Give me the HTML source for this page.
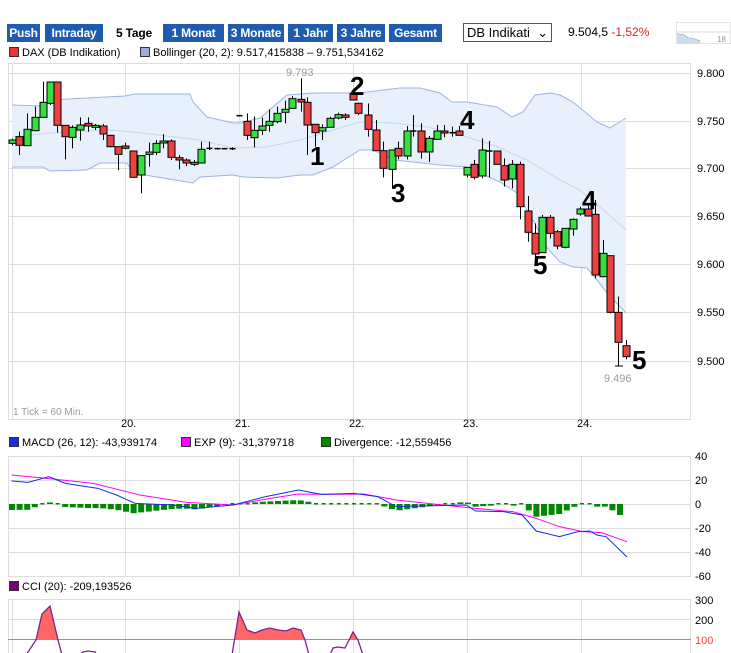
<!DOCTYPE html>
<html><head><meta charset="utf-8"><style>
body{margin:0;width:731px;height:653px;overflow:hidden;background:#fff;font-family:"Liberation Sans",sans-serif;position:relative}
.b{position:absolute;top:24px;height:18px;background:#1f5cb0;color:#fff;font:bold 12px "Liberation Sans",sans-serif;line-height:18px;text-align:center;white-space:nowrap;letter-spacing:-0.2px}
.sel{background:#fff;color:#000}
.t{position:absolute;font-size:11px;color:#000;white-space:nowrap}
.sq{display:inline-block;width:8px;height:8px;border:1px solid #333;margin-right:3px;vertical-align:-1px}
</style></head><body>
<div class="b" style="left:7px;width:33px">Push</div>
<div class="b" style="left:45px;width:58px">Intraday</div>
<div class="b sel" style="left:109px;width:50px">5 Tage</div>
<div class="b" style="left:163px;width:61px">1 Monat</div>
<div class="b" style="left:228px;width:56px">3 Monate</div>
<div class="b" style="left:288px;width:45px">1 Jahr</div>
<div class="b" style="left:337px;width:48px">3 Jahre</div>
<div class="b" style="left:389px;width:53px">Gesamt</div>
<div style="position:absolute;left:463px;top:23px;border:1px solid #555;font-size:13px;line-height:17px;padding-left:3px;box-sizing:border-box;width:89px;height:19px">DB Indikati <span style="position:absolute;right:3px;top:0">&#8964;</span></div>
<div class="t" style="left:568px;top:25px;font-size:12px">9.504,5 <span style="color:#d22">-1,52%</span></div>
<svg style="position:absolute;left:676px;top:22px" width="55" height="22"><rect x="0" y="0" width="55" height="22" fill="#fff" stroke="#ccc"/><line x1="0" y1="10" x2="55" y2="10" stroke="#ddd"/><polyline points="1,12 8,13 12,16 18,17 24,19" fill="none" stroke="#89a" /><polygon points="1,12 8,13 12,16 18,17 24,19 24,22 1,22" fill="#cde"/><text x="41" y="20" font-size="8" fill="#999">18</text></svg>
<div class="t" style="left:9px;top:47px"><span class="sq" style="background:#e33"></span>DAX (DB Indikation)</div>
<div class="t" style="left:140px;top:47px"><span class="sq" style="background:#9ab0dc"></span>Bollinger (20, 2): 9.517,415838 – 9.751,534162</div>
<div class="t" style="left:9px;top:437px"><span class="sq" style="background:#1030e0"></span>MACD (26, 12): -43,939174</div>
<div class="t" style="left:181px;top:437px"><span class="sq" style="background:#f0f"></span>EXP (9): -31,379718</div>
<div class="t" style="left:321px;top:437px"><span class="sq" style="background:#080"></span>Divergence: -12,559456</div>
<div class="t" style="left:9px;top:581px"><span class="sq" style="background:#707"></span>CCI (20): -209,193526</div>
<svg id="s" style="position:absolute;left:0;top:0" width="731" height="653" font-family="Liberation Sans,sans-serif"></svg>
<script>
var s=document.getElementById('s'),h='';
function L(x1,y1,x2,y2,c,w){h+='<line x1="'+x1+'" y1="'+y1+'" x2="'+x2+'" y2="'+y2+'" stroke="'+c+'" stroke-width="'+(w||1)+'"/>';}
function T(x,y,t,o){h+='<text x="'+x+'" y="'+y+'" '+(o||'font-size="11"')+'>'+t+'</text>';}
var vx=[125,239,353,467,581];
h+='<rect x="8.5" y="63.5" width="682" height="356" fill="none" stroke="#ddd"/>';
L(12.5,63,12.5,420,'#ddd');
[73,121,168,216,264,312,361].forEach(function(y,i){L(8,y+.5,691,y+.5,'#ddd');T(697,y+4,['9.800','9.750','9.700','9.650','9.600','9.550','9.500'][i]);});
vx.forEach(function(x,i){L(x+.5,63,x+.5,420,'#ddd');T(x-4,427,(20+i)+'.');});
T(13,415,'1 Tick = 60 Min.','font-size="10" fill="#999"');
var up=[[12,105],[43,106],[50,100],[125,96],[135,94],[190,94],[193,102],[207,117],[233,123],[240,123],[260,118],[287,95],[313,93],[353,93],[360,93],[383,90],[400,88],[420,88],[440,93],[452,102],[467,102],[497,107],[512,117],[523,112],[535,95],[550,93],[560,95],[573,102],[597,122],[610,128],[626,118]];
var lo=[[12,167],[43,167],[50,171],[87,170],[100,163],[127,163],[133,173],[193,183],[200,177],[233,175],[243,177],[277,178],[300,175],[313,175],[333,167],[347,158],[360,150],[373,150],[393,160],[413,162],[440,165],[467,167],[480,173],[500,182],[517,193],[533,220],[547,248],[560,262],[573,267],[587,268],[597,280],[607,293],[626,313]];
var md=[[12,137],[50,133],[110,130],[133,132],[200,140],[233,148],[267,147],[300,140],[333,130],[360,122],[393,123],[427,127],[460,135],[493,145],[527,160],[560,180],[580,190],[600,207],[626,230]];
function P(a){return a.map(function(p){return p.join(',')}).join(' ');}
h+='<polygon points="'+P(up)+' '+P(lo.slice().reverse())+'" fill="#e8f0fc"/>';
h+='<polyline points="'+P(up)+'" fill="none" stroke="#9db3df"/>';
h+='<polyline points="'+P(lo)+'" fill="none" stroke="#9db3df"/>';
h+='<polyline points="'+P(md)+'" fill="none" stroke="#c4d6f2"/>';
var c2=[[37,240,250,236,256,'g'],[58,230,256,215,285,'r'],[82,208,257,160,257,'g'],[106,172,212,140,212,'g'],[128,127,172,65,172,'g'],[150,66,130,66,135,'g'],[172,66,196,66,218,'r'],[196,196,230,196,298,'r'],[216,202,232,196,265,'g'],[240,195,210,172,242,'g'],[265,190,198,172,215,'r'],[286,196,202,192,210,'g'],[310,198,222,192,240,'r'],[330,226,260,226,262,'r'],[354,260,283,260,330,'r'],[375,258,265,248,268,'r'],[400,273,352,273,352,'r'],[424,287,345,287,400,'g'],[446,276,283,248,320,'g'],[468,250,277,240,285,'g'],[490,243,249,222,265,'g'],[514,243,292,238,300,'r'],[538,293,300,285,328,'r'],[558,300,309,295,318,'r'],[582,307,310,300,318,'g'],[604,268,309,245,309,'g'],[628,265,265,245,270,'d'],[650,266,266,263,269,'d'],[672,266,266,264,268,'d'],[696,266,266,262,270,'d'],[718,167,167,167,167,'d'],[742,184,226,160,240,'r'],[762,211,233,170,262,'g'],[786,198,211,173,225,'g'],[808,184,196,148,215,'g'],[830,160,185,140,190,'g'],[856,148,157,122,190,'g'],[876,116,145,108,145,'g'],[902,118,126,55,155,'r'],[922,127,195,112,285,'r'],[946,193,218,193,260,'r'],[966,203,213,193,240,'g'],[990,175,202,170,202,'g'],[1014,164,174,158,178,'g'],[1036,165,172,160,180,'r'],[1060,100,120,100,120,'r']];
var c3=[[-5,130,160,128,165,'r'],[25,165,208,130,230,'r'],[48,210,272,180,272,'r'],[70,272,325,245,352,'r'],[95,270,328,270,385,'g'],[115,265,288,245,298,'r'],[140,213,288,198,298,'g'],[160,213,213,165,230,'d'],[184,213,276,190,296,'r'],[208,235,276,228,306,'g'],[230,213,238,195,238,'g'],[252,213,218,195,232,'r'],[275,218,218,200,230,'d'],[298,213,226,198,226,'r'],[320,322,345,322,352,'g'],[343,313,352,300,358,'r'],[367,270,348,235,355,'g'],[388,273,273,243,352,'d'],[412,273,313,273,313,'r'],[433,317,360,295,380,'r'],[457,313,357,300,385,'g'],[481,313,440,305,478,'r'],[503,453,517,408,545,'r'],[526,520,582,490,590,'r'],[546,472,578,465,578,'g'],[570,472,520,465,535,'r'],[592,515,558,510,568,'r'],[616,505,562,505,565,'g'],[640,478,507,475,527,'g'],[661,447,462,440,467,'g'],[685,447,468,430,470,'r'],[705,463,645,420,655,'r'],[730,580,650,540,652,'g'],[750,587,757,587,760,'r'],[775,757,847,710,917,'r'],[798,857,890,840,898,'r']];
function C(d,ox,oy){var x=Math.round(d[0]/3+ox)+.5,bt=d[1]/3+oy,bb=d[2]/3+oy,wt=d[3]/3+oy,wb=d[4]/3+oy;
L(x,wt,x,wb,'#000');
if(d[5]=='d'){L(x-3,bt,x+3,bt,'#000',1.5);return;}
h+='<rect x="'+(x-3.5)+'" y="'+bt+'" width="7" height="'+Math.max(bb-bt,2)+'" fill="'+(d[5]=='g'?'#33e040':'#ee4040')+'" stroke="#000"/>';}
c2.forEach(function(d){C(d,0,60)});c3.forEach(function(d){C(d,360,60)});
L(615,366,623,366,'#000');
T(286,76,'9.793','font-size="11" fill="#999"');T(604,382,'9.496','font-size="11" fill="#999"');
var n='font-size="26" font-weight="bold" fill="#000"';
T(310,165,'1',n);T(350,95,'2',n);T(391,202,'3',n);T(460,129,'4',n);T(533,274,'5',n);T(582,209,'4',n);T(632,369,'5',n);
h+='<rect x="8.5" y="456.5" width="682" height="120" fill="none" stroke="#ddd"/>';
[456,480,504,528,552,576].forEach(function(y,i){if(i>0&&i<5)L(8,y+.5,691,y+.5,'#ddd');T(695,y+4,['40','20','0','-20','-40','-60'][i]);});
vx.forEach(function(x){L(x+.5,456,x+.5,576,'#ddd');});
function cv(a){return a.map(function(p){return [p[0]/2.145,p[1]/3+395]});}
var bl=cv([[25,258],[60,262],[105,245],[140,265],[210,280],[250,300],[290,325],[370,330],[420,340],[500,330],[570,305],[640,285],[690,298],[760,295],[810,305],[850,335],[940,332],[1000,330],[1020,348],[1080,350],[1120,360],[1150,408],[1200,425],[1240,410],[1265,408],[1280,420],[1300,425],[1345,486]]);
var pk=cv([[25,240],[100,250],[200,265],[300,300],[400,322],[500,330],[580,310],[640,297],[700,298],[780,297],[850,315],[950,330],[1020,340],[1100,350],[1150,370],[1200,395],[1250,410],[1290,413],[1345,440]]);
function ip(a,x){for(var i=1;i<a.length;i++)if(a[i][0]>=x){var t=(x-a[i-1][0])/(a[i][0]-a[i-1][0]);return a[i-1][1]+t*(a[i][1]-a[i-1][1]);}return a[a.length-1][1];}
for(var x=12;x<=627;x+=7.6){var v=ip(bl,x)-ip(pk,x);var y0=504;if(Math.abs(v)<1.2){h+='<rect x="'+(x-2)+'" y="503" width="4" height="1.5" fill="#080"/>';}else h+='<rect x="'+(x-3)+'" y="'+(v>0?y0:y0+v)+'" width="6" height="'+Math.abs(v)+'" fill="#080"/>';}
h+='<polyline points="'+P(pk)+'" fill="none" stroke="#f0f"/>';
h+='<polyline points="'+P(bl)+'" fill="none" stroke="#1030e0"/>';
h+='<rect x="8.5" y="599.5" width="682" height="60" fill="none" stroke="#ddd"/>';
L(12.5,599,12.5,653,'#ddd');
L(8,619.5,691,619.5,'#ddd');
vx.forEach(function(x){L(x+.5,599,x+.5,653,'#ddd');});
T(695,604,'300');T(695,624,'200');T(695,644,'100','font-size="11" fill="#f44"');
var cc=[[26,655],[36,640],[42,614],[50,606],[58,640],[62,655]],cd=[[79,655],[83,652],[88,651],[95,652],[97,655]],ce=[[232,655],[239,612],[247,630],[255,633],[262,630],[270,628],[278,630],[286,631],[293,628],[301,630],[305,640],[309,655]],cf=[[330,655],[333,648],[338,647],[345,648],[353,632],[358,640],[363,655]];
h+='<clipPath id="cp"><rect x="0" y="0" width="731" height="639"/></clipPath>';
[cc,ce,cf].forEach(function(a){h+='<polygon clip-path="url(#cp)" points="'+P(a)+'" fill="#f66"/>';});
L(8,639.5,691,639.5,'#f66');
[cc,cd,ce,cf].forEach(function(a){h+='<polyline points="'+P(a)+'" fill="none" stroke="#802090" stroke-width="1.3"/>';});
s.innerHTML=h;
</script>
</body></html>
